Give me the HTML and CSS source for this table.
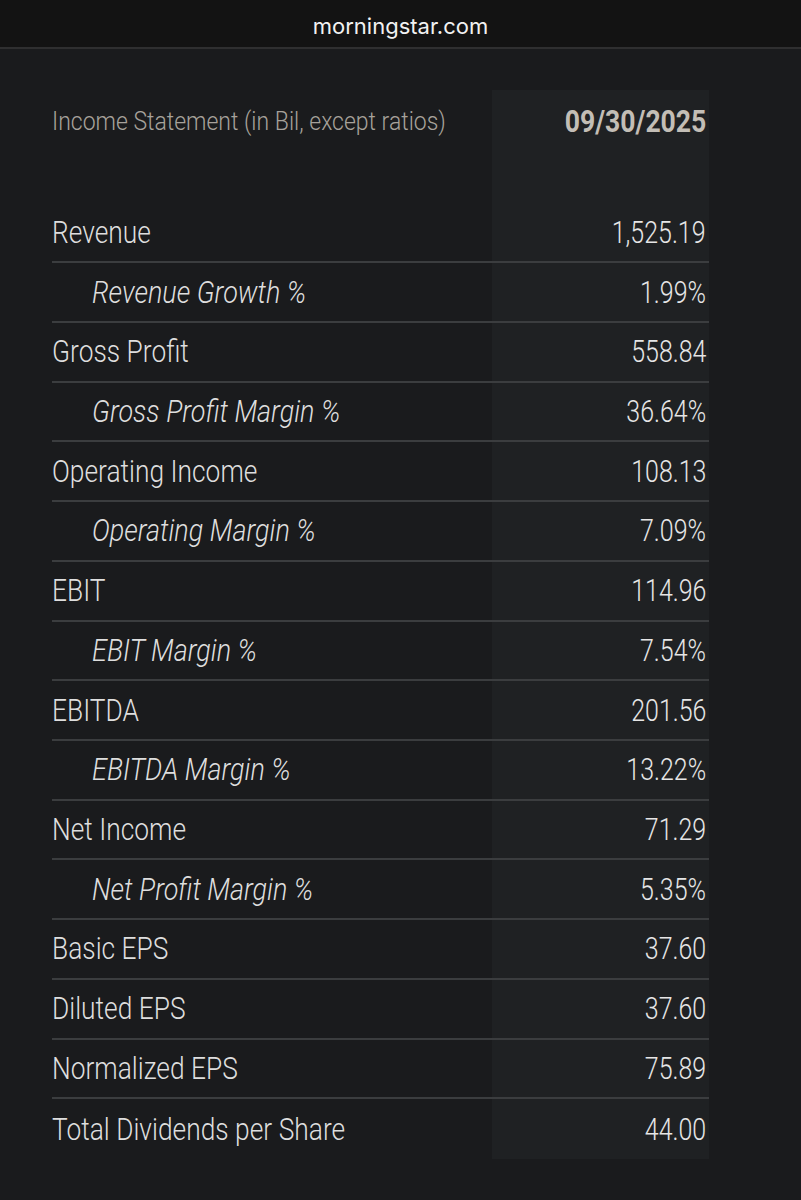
FILE: index.html
```html
<!DOCTYPE html>
<html>
<head>
<meta charset="utf-8">
<link rel="stylesheet" href="styles.css">
</head>
<body>
<div class="topbar"><span class="site">morningstar.com</span></div>
<main class="content">
  <div class="table">
    <div class="head">
      <div class="label head-label"><span class="t">Income Statement (in Bil, except ratios)</span></div>
      <div class="value head-value"><span class="t">09/30/2025</span></div>
    </div>
    <div class="row"><div class="label"><span class="t">Revenue</span></div><div class="value"><span class="t">1,525.19</span></div></div>
    <div class="row sub"><div class="label"><span class="t">Revenue Growth %</span></div><div class="value"><span class="t">1.99%</span></div></div>
    <div class="row"><div class="label"><span class="t">Gross Profit</span></div><div class="value"><span class="t">558.84</span></div></div>
    <div class="row sub"><div class="label"><span class="t">Gross Profit Margin %</span></div><div class="value"><span class="t">36.64%</span></div></div>
    <div class="row"><div class="label"><span class="t">Operating Income</span></div><div class="value"><span class="t">108.13</span></div></div>
    <div class="row sub"><div class="label"><span class="t">Operating Margin %</span></div><div class="value"><span class="t">7.09%</span></div></div>
    <div class="row"><div class="label"><span class="t">EBIT</span></div><div class="value"><span class="t">114.96</span></div></div>
    <div class="row sub"><div class="label"><span class="t">EBIT Margin %</span></div><div class="value"><span class="t">7.54%</span></div></div>
    <div class="row"><div class="label"><span class="t">EBITDA</span></div><div class="value"><span class="t">201.56</span></div></div>
    <div class="row sub"><div class="label"><span class="t">EBITDA Margin %</span></div><div class="value"><span class="t">13.22%</span></div></div>
    <div class="row"><div class="label"><span class="t">Net Income</span></div><div class="value"><span class="t">71.29</span></div></div>
    <div class="row sub"><div class="label"><span class="t">Net Profit Margin %</span></div><div class="value"><span class="t">5.35%</span></div></div>
    <div class="row"><div class="label"><span class="t">Basic EPS</span></div><div class="value"><span class="t">37.60</span></div></div>
    <div class="row"><div class="label"><span class="t">Diluted EPS</span></div><div class="value"><span class="t">37.60</span></div></div>
    <div class="row"><div class="label"><span class="t">Normalized EPS</span></div><div class="value"><span class="t">75.89</span></div></div>
    <div class="row last"><div class="label"><span class="t">Total Dividends per Share</span></div><div class="value"><span class="t">44.00</span></div></div>
  </div>
</main>
</body>
</html>
```
FILE: styles.css
```css
html, body {
  margin: 0;
  padding: 0;
  background: #1a1b1d;
}
body {
  width: 801px;
  height: 1200px;
  overflow: hidden;
  font-family: Roboto, "Liberation Sans", sans-serif;
}
.topbar {
  height: 47px;
  background: #131313;
  border-bottom: 2px solid #2f2f30;
  display: flex;
  align-items: center;
  justify-content: center;
}
.site {
  font-family: Inter, "Noto Sans", sans-serif;
  font-size: 22px;
  color: #f2f2f2;
  margin-top: 5px;
}
.content {
  padding: 41px 0 0 52px;
}
.table {
  width: 657px;
}
.head {
  display: flex;
  height: 113.5px;
}
.row {
  display: flex;
  height: 59.73px;
  box-sizing: border-box;
  border-bottom: 2px solid #3b3d3f;
}
.row.last {
  border-bottom: none;
}
.t {
  display: inline-block;
  white-space: nowrap;
  transform: scaleX(0.85);
  transform-origin: left center;
}
.label {
  width: 440px;
  flex: none;
  display: flex;
  align-items: center;
  font-size: 31px;
  font-weight: 300;
  color: #dedede;
}
.row.sub .label {
  padding-left: 40px;
  box-sizing: border-box;
  font-style: italic;
}
.row.sub .label .t {
  transform: scaleX(0.87);
}
.value {
  flex: 1;
  display: flex;
  align-items: center;
  justify-content: flex-end;
  padding-right: 3px;
  background: #1f2123;
  font-size: 31px;
  font-weight: 300;
  color: #e6e6e6;
}
.value .t {
  transform: scaleX(0.805);
  transform-origin: right center;
}
.head .label,
.head .value {
  align-items: flex-start;
}
.head-label {
  padding-top: 17px;
  font-size: 25px;
  color: #a7a29b;
}
.head-label .t {
  transform: scaleX(0.92);
}
.head-value {
  padding-top: 13px;
  font-size: 31px;
  font-weight: bold;
  color: #c3beb6;
}
.head-value .t {
  transform: scaleX(0.856);
}
```
